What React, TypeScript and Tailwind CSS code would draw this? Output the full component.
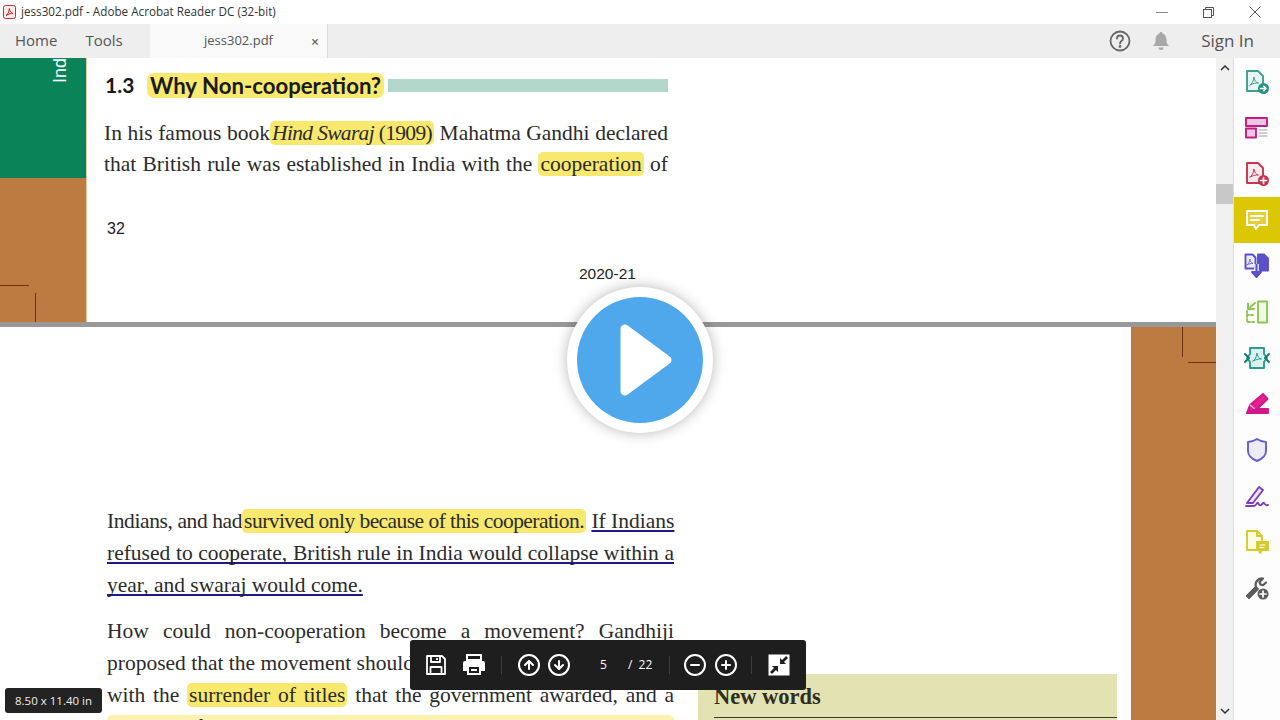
import React from "react";
import { CircleArrowUp, CircleArrowDown, CircleMinus, CirclePlus } from "lucide-react";

const Hl = ({ children, className = "" }: { children: React.ReactNode; className?: string }) => (
  <span className={"bg-[#f8e96e] rounded-[5px] px-[2px] " + className}>{children}</span>
);

const Ul = ({ children }: { children: React.ReactNode }) => (
  <span className="underline decoration-[#1c1c80] decoration-[1.5px] underline-offset-[2px] [text-decoration-skip-ink:none]">{children}</span>
);

const Line = ({ children, w, className = "" }: { children: React.ReactNode; w: string; className?: string }) => (
  <div className={"whitespace-nowrap text-justify [text-align-last:justify] " + w + " " + className}>{children}</div>
);

const Ic = ({ children }: { children: React.ReactNode }) => (
  <svg width="26" height="26" viewBox="0 0 26 26" fill="none" strokeWidth="1.9" strokeLinejoin="round" strokeLinecap="round">
    {children}
  </svg>
);

const PdfMark = ({ c, x = 0, y = 0 }: { c: string; x?: number; y?: number }) => (
  <path transform={`translate(${x} ${y})`} d="M5 15c2-1 3.5-4 4-8 0 3 2 5.5 4.5 6-2.5-.2-5.5 .5-8.5 2z" stroke={c} strokeWidth="1" />
);

const sideIcons: React.ReactNode[] = [
  <Ic key="a">
    <path d="M3 2h11l5 5v15H3z" stroke="#3f9f8f" fill="#e8f5f2" />
    <PdfMark c="#3f9f8f" x={1} y={1} />
    <circle cx="19.5" cy="19.5" r="5.5" fill="#26937f" />
    <path d="M16.5 19.5h5.5M19.8 17.2l2.3 2.3-2.3 2.3" stroke="#fff" strokeWidth="1.5" />
  </Ic>,
  <Ic key="b">
    <rect x="2" y="3" width="21" height="8" stroke="#c21e80" fill="#edc5e8" />
    <rect x="2" y="13.5" width="10" height="9" stroke="#c21e80" fill="#edc5e8" />
    <path d="M15 15h8M15 18h8M15 21h8" stroke="#a89ab0" strokeWidth="1" />
  </Ic>,
  <Ic key="c">
    <path d="M3 2h11l5 5v15H3z" stroke="#c9344f" fill="#fdecef" />
    <PdfMark c="#c9344f" x={1} y={1} />
    <circle cx="19.5" cy="19.5" r="5.5" fill="#c9304c" />
    <path d="M16.5 19.5h6M19.5 16.5v6" stroke="#fff" strokeWidth="1.7" />
  </Ic>,
  <Ic key="d">
    <path d="M3 4h20v14h-8l-3 4-2-4H3z" stroke="#fff" strokeWidth="1.9" fill="#e3d03c" />
    <path d="M7 9h12M7 13h8" stroke="#fff" strokeWidth="1.9" />
  </Ic>,
  <Ic key="e">
    <path d="M1.5 1.5h7l3 3v11h-10z" stroke="#5a50c8" fill="#ecebfb" />
    <path d="M3 12c1.5-.8 2.5-3 3-6 0 2 1 3.5 3 4.5-2-.2-4 .3-6 1.500z" stroke="#5a50c8" strokeWidth="0.8" />
    <path d="M14 1.5h6l4 4v12H14z" fill="#5a50c8" stroke="#5a50c8" />
    <path d="M12.5 11v8" stroke="#fff" strokeWidth="4.5" strokeLinecap="butt" />
    <path d="M12.5 11v8" stroke="#5a50c8" strokeWidth="2.2" strokeLinecap="butt" />
    <path d="M8 19h9l-4.5 5z" fill="#5a50c8" stroke="#5a50c8" />
  </Ic>,
  <Ic key="f">
    <rect x="14" y="2.5" width="9" height="21" stroke="#8ec653" fill="#f0f8e6" />
    <path d="M3 12v11h8M3 16h8" stroke="#8ec653" strokeDasharray="2 2" />
    <path d="M11 4L5 9M4 4.5V10h6" stroke="#8ec653" strokeWidth="2" />
  </Ic>,
  <Ic key="g">
    <path d="M6 3h14v6l3 4-3 4v6H6v-6l-3-4 3-4z" stroke="#2a9d93" fill="#dcf2ef" />
    <path d="M1 9l4 4-4 4M25 9l-4 4 4 4" stroke="#14786f" strokeWidth="1.9" />
    <PdfMark c="#2a9d93" x={4} y={1} />
  </Ic>,
  <Ic key="h">
    <path d="M3 22l3-8L19 3l4.5 5L12 19z" fill="#e2218f" stroke="#d0188a" />
    <path d="M6 14l6 5" stroke="#f7b8dc" strokeWidth="1.2" />
    <path d="M3 22h21v-4H13z" fill="#d0188a" stroke="#d0188a" />
  </Ic>,
  <Ic key="i">
    <path d="M13 2c3 2 6 3 9 3v9c0 5-4 8-9 10-5-2-9-5-9-10V5c3 0 6-1 9-3z" stroke="#6060c8" strokeWidth="1.9" fill="#ebebfa" />
  </Ic>,
  <Ic key="j">
    <path d="M3 20L15 4l4 3L9 20z" stroke="#7b3fc0" strokeWidth="1.9" fill="#efe5f9" />
    <path d="M2 23h8c2 0 3-4 4-3s1 3 3 2 2-3 3-2 1 3 4 2" stroke="#7b3fc0" strokeWidth="1.9" />
  </Ic>,
  <Ic key="k">
    <path d="M3 2h10l5 5v14H3z" stroke="#d3cb2b" strokeWidth="1.9" fill="#fbfae3" />
    <path d="M13 2v5h5" stroke="#d3cb2b" />
    <path d="M13 13h11v8h-6l-2 3-1-3h-2z" fill="#d3cb2b" stroke="#d3cb2b" />
    <path d="M16 16h5M16 18.5h4" stroke="#fff" strokeWidth="1" />
  </Ic>,
  <Ic key="l">
    <path d="M3 21L12 12c-1-3 0-6 3-8 1.5-.8 3-.8 4-.5l-3.5 3.5 1 2.5 2.5 .8L22 7.5" stroke="#5c5c5c" strokeWidth="2.2" />
    <path d="M3 21l9-9 2 2-9 9z" fill="#5c5c5c" stroke="#5c5c5c" />
    <circle cx="19" cy="19" r="5.5" fill="#5c5c5c" />
    <path d="M16 19h6M19 16v6" stroke="#fff" strokeWidth="1.7" />
  </Ic>,
];

const Floppy = () => (
  <svg width="22" height="22" viewBox="0 0 22 22" fill="none" stroke="#fff" strokeWidth="1.8" strokeLinejoin="round">
    <path d="M2 2h15l3 3v15H2z" />
    <path d="M6 2v6h9V2M12 4v2" />
    <path d="M5.5 20v-7h11v7" />
  </svg>
);

const Printer = () => (
  <svg width="24" height="22" viewBox="0 0 24 22" fill="none">
    <path d="M5 1h14v5H5z" stroke="#fff" strokeWidth="2" />
    <path d="M3 7h18a2 2 0 0 1 2 2v8h-4v4H5v-4H1V9a2 2 0 0 1 2-2z" fill="#fff" />
    <path d="M7 13h10v6H7z" fill="#1e1e1e" />
    <path d="M9 15h6v2H9z" fill="#fff" />
  </svg>
);

const FitIcon = () => (
  <svg width="22" height="22" viewBox="0 0 22 22">
    <rect x="0.5" y="0.5" width="21" height="21" fill="#fff" />
    <path d="M19 3l-5 5" stroke="#1e1e1e" strokeWidth="2.6" fill="none" />
    <path d="M12 4v6h6z" fill="#1e1e1e" />
    <path d="M3 19l5-5" stroke="#1e1e1e" strokeWidth="2.6" fill="none" />
    <path d="M10 18v-6H4z" fill="#1e1e1e" />
  </svg>
);

const Sep = () => <div className="w-px h-[18px] bg-[#3d3d3d]" />;

export default function App() {
  return (
    <div className="relative w-[1280px] h-[720px] overflow-hidden bg-white font-['Open_Sans',sans-serif]">
      {/* Title bar */}
      <div className="h-6 flex items-center bg-white">
        <svg className="ml-[3px]" width="13" height="14" viewBox="0 0 13 14" fill="none">
          <rect x="0.5" y="0.5" width="12" height="13" rx="2" fill="#fdeaea" stroke="#b5333b" />
          <path d="M3 10.5c2-1 3-3.5 3.3-7 .3 2.500 1.7 4.500 3.7 5-2-.2-4.500 .5-7 2z" stroke="#c8202c" strokeWidth="1" />
        </svg>
        <span className="ml-[5px] text-[11.7px] text-[#333] whitespace-nowrap">jess302.pdf - Adobe Acrobat Reader DC (32-bit)</span>
        <div className="ml-auto flex items-center">
          <div className="w-[12px] h-px bg-[#8a8a8a] mr-[35px]" />
          <svg className="mr-[35px]" width="11" height="11" viewBox="0 0 11 11" fill="none" stroke="#555">
            <rect x="0.5" y="2.5" width="8" height="8" fill="#fff" />
            <path d="M2.5 2.5v-2h8v8h-2" />
          </svg>
          <svg className="mr-[19px]" width="12" height="12" viewBox="0 0 12 12" stroke="#555">
            <path d="M0.5 0.5l11 11M11.5 0.5l-11 11" />
          </svg>
        </div>
      </div>

      {/* Tab bar */}
      <div className="h-[34px] flex items-stretch bg-[#eeeeee] text-[#555]">
        <div className="w-[150px] flex items-center text-[15px] pl-[15px] gap-[28px] pb-[2px]">
          <span>Home</span>
          <span>Tools</span>
        </div>
        <div className="w-[178px] bg-[#f9f9f9] border-r border-[#dcdcdc] flex items-center text-[13px] pl-[54px]">
          <span>jess302.pdf</span>
          <span className="ml-[38px] text-[14px] font-semibold text-[#666]">×</span>
        </div>
        <div className="ml-auto flex items-center text-[17px] pr-[26px]">
          <svg width="22" height="22" viewBox="0 0 22 22" fill="none" stroke="#666" strokeWidth="1.8">
            <circle cx="11" cy="11" r="9.5" />
            <path d="M8 8.5c0-4 6-4 6 0 0 2.5-3 2.5-3 5" strokeLinecap="round" />
            <circle cx="11" cy="16.5" r="0.5" fill="#666" />
          </svg>
          <svg className="ml-[20px]" width="20" height="20" viewBox="0 0 20 20" fill="#a8a8a8">
            <path d="M10 1c1 0 1.5 .7 1.5 1.5C14.5 3.5 15.5 6 15.5 9c0 3 .8 4.5 2.5 6H2c1.7-1.5 2.5-3 2.5-6 0-3 1-5.5 4-6.5C8.500 1.700 9 1 10 1z" />
            <path d="M7.5 16.5h5a2.500 2.500 0 0 1-5 0z" />
          </svg>
          <span className="ml-[30px]">Sign In</span>
        </div>
      </div>

      {/* Main */}
      <div className="h-[662px] flex">
        {/* Document */}
        <div className="w-[1216px] flex flex-col overflow-hidden font-['Liberation_Serif',serif] text-[#2b2b2b]">
          {/* Page 1 */}
          <div className="h-[264px] shrink-0 flex">
            <div className="w-[87px] shrink-0 flex flex-col border-r border-[#e8c9a4]">
              <div className="h-[120px] bg-[#0b8359] overflow-hidden flex justify-end pr-[17px]">
                <span className="[writing-mode:vertical-rl] rotate-180 text-white text-[18px] font-['Liberation_Sans',sans-serif] leading-[18px] h-[25px] overflow-hidden text-left">India</span>
              </div>
              <div className="relative flex-1 bg-[#bb7b41]">
                <div className="absolute left-0 top-[107px] w-[29px] h-px bg-[#6e3210]" />
                <div className="absolute left-[35px] top-[115px] w-px h-[29px] bg-[#6e3210]" />
              </div>
            </div>
            <div className="flex-1 pl-[17px]">
              <div className="flex items-center h-[30px] mt-[12px] font-['Lato',sans-serif] font-bold text-[#1a1a1a]">
                <span className="w-[43px] pl-px text-[21px]">1.3</span>
                <span className="bg-[#f9e96e] rounded-[7px] px-[3px] text-[22.2px] leading-[25px] whitespace-nowrap">Why Non-cooperation?</span>
                <div className="ml-[4px] w-[280px] h-[13px] bg-[#b2d8cc]" />
              </div>
              <div className="mt-[18px] text-[21.5px] leading-[31px]">
                <Line w="w-[564px]">In his famous book<Hl className="tracking-[-0.7px]"><i>Hind Swaraj</i> (1909)</Hl> Mahatma Gandhi declared</Line>
                <Line w="w-[564px]">that British rule was established in India with the <Hl>cooperation</Hl> of</Line>
              </div>
              <div className="mt-[39px] pl-[3px] font-['Liberation_Sans',sans-serif] text-[16px] leading-[20px] text-[#222]">32</div>
              <div className="mt-[25px] pl-[475px] font-['Liberation_Sans',sans-serif] text-[15.5px] leading-[20px] text-[#222]">2020-21</div>
            </div>
          </div>

          <div className="h-[5px] shrink-0 bg-[#989898]" />

          {/* Page 2 */}
          <div className="flex-1 flex min-h-0">
            <div className="w-[698px] shrink-0 pl-[107px] pt-[178px] text-[21.5px] leading-[32px]">
              <Line w="w-[567px]"><span className="tracking-[-0.4px]">Indians, and had</span><Hl className="tracking-[-0.55px]">survived only because of this cooperation.</Hl> <Ul>If Indians</Ul></Line>
              <Line w="w-[567px]"><Ul>refused to cooperate, British rule in India would collapse within a</Ul></Line>
              <div className="whitespace-nowrap"><Ul>year, and swaraj would come.</Ul></div>
              <Line w="w-[567px]" className="mt-[14px]">How could non-cooperation become a movement? Gandhiji</Line>
              <Line w="w-[567px]">proposed that the movement should unfold in stages. It should begin</Line>
              <Line w="w-[567px]">with the <Hl>surrender of titles</Hl> that the government awarded, and a</Line>
              <Line w="w-[567px]"><Hl className="!bg-[#fbf2b0]">boycott of civil services, army, police, courts and legislative</Hl></Line>
            </div>
            <div className="w-[433px] shrink-0 flex items-end pr-[14px] overflow-hidden">
              <div className="w-[419px] h-[46px] bg-[#e3e2b2] pl-[16px] pt-[8px] font-bold text-[22.5px] leading-[30px] text-[#2e2e22]">
                <div className="h-[36px] border-b border-[#3a3a30]">New words</div>
              </div>
            </div>
            <div className="relative w-[85px] shrink-0 bg-[#bb7b41]">
              <div className="absolute left-[51px] top-0 w-px h-[30px] bg-[#6e3210]" />
              <div className="absolute left-[57px] top-[35px] w-[28px] h-px bg-[#6e3210]" />
            </div>
          </div>
        </div>

        {/* Scrollbar */}
        <div className="w-[17px] shrink-0 bg-[#f0f0f0] flex flex-col items-center">
          <svg className="mt-[7px]" width="10" height="6" viewBox="0 0 10 6" fill="none" stroke="#333" strokeWidth="1.5">
            <path d="M1 5l4-4 4 4" />
          </svg>
          <div className="w-full h-[20px] mt-[113px] bg-[#c8c8c8]" />
          <svg className="mt-auto mb-[6px]" width="10" height="6" viewBox="0 0 10 6" fill="none" stroke="#333" strokeWidth="1.5">
            <path d="M1 1l4 4 4-4" />
          </svg>
        </div>

        {/* Side panel */}
        <div className="flex-1 bg-[#fdfdfd] border-l border-[#dedede] pt-px">
          {sideIcons.map((icon, i) => (
            <div key={i} className={"h-[46px] flex items-center justify-center " + (i === 3 ? "bg-[#dcc705]" : "")}>
              {icon}
            </div>
          ))}
        </div>
      </div>

      {/* Text cursor */}
      <svg className="absolute left-[228px] top-[549px]" width="8" height="16" viewBox="0 0 8 16" fill="none" stroke="#222" strokeWidth="1">
        <path d="M1 1c2 0 3 1 3 2v10c0 1-1 2-3 2M7 1c-2 0-3 1-3 2M7 15c-2 0-3-1-3-2" />
      </svg>

      {/* Page size */}
      <div className="absolute left-[5px] top-[688px] w-[97px] h-[25px] rounded-[3px] bg-[#232323] flex items-center justify-center text-[11.5px] text-[#eee] whitespace-nowrap">
        8.50 x 11.40 in
      </div>

      {/* Floating toolbar */}
      <div className="absolute left-[410px] top-[640px] w-[396px] h-[50px] rounded-[3px] bg-[#1e1e1e] flex items-center text-white text-[12px] font-['Open_Sans',sans-serif]">
        <div className="ml-[15px]"><Floppy /></div>
        <div className="ml-[15px]"><Printer /></div>
        <div className="ml-[15px]"><Sep /></div>
        <CircleArrowUp className="ml-[15px]" size={24} strokeWidth={2} />
        <CircleArrowDown className="ml-[6px]" size={24} strokeWidth={2} />
        <span className="ml-[29px] w-[8px]">5</span>
        <span className="ml-[20px]">/</span>
        <span className="ml-[6px] tracking-[0.2px]">22</span>
        <div className="ml-[16px]"><Sep /></div>
        <CircleMinus className="ml-[13px]" size={24} strokeWidth={2} />
        <CirclePlus className="ml-[7px]" size={24} strokeWidth={2} />
        <div className="ml-[13px]"><Sep /></div>
        <div className="ml-[16px]"><FitIcon /></div>
      </div>

      {/* Play overlay */}
      <div className="absolute left-[567px] top-[287px] w-[146px] h-[146px] rounded-full bg-white shadow-[0_0_14px_rgba(0,0,0,0.28)] flex items-center justify-center">
        <div className="w-[126px] h-[126px] rounded-full bg-[#4fa8ec] flex items-center justify-center">
          <svg className="ml-[11px]" width="54" height="72" viewBox="0 0 54 72">
            <path d="M6 5v62l42-31z" fill="#fff" stroke="#fff" strokeWidth="9" strokeLinejoin="round" />
          </svg>
        </div>
      </div>
    </div>
  );
}
